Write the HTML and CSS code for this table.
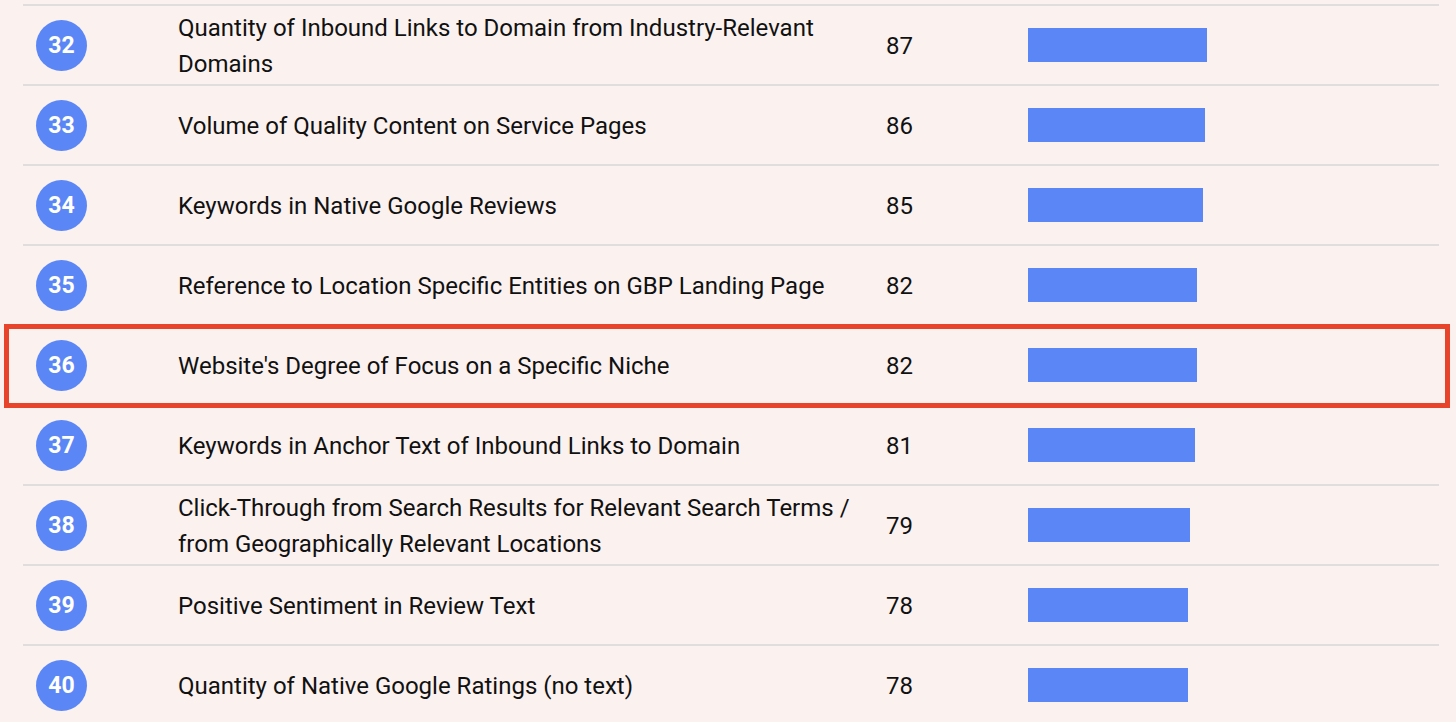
FILE: index.html
```html
<!DOCTYPE html>
<html>
<head>
<meta charset="utf-8">
<link rel="stylesheet" href="styles.css">
</head>
<body>
<div class="table">
  <div class="row"><div class="rank">32</div><div class="name">Quantity of Inbound Links to Domain from Industry-Relevant Domains</div><div class="score">87</div><div class="barcell"><div class="bar" style="width:179px"></div></div></div>
  <div class="row"><div class="rank">33</div><div class="name">Volume of Quality Content on Service Pages</div><div class="score">86</div><div class="barcell"><div class="bar" style="width:177px"></div></div></div>
  <div class="row"><div class="rank">34</div><div class="name">Keywords in Native Google Reviews</div><div class="score">85</div><div class="barcell"><div class="bar" style="width:175px"></div></div></div>
  <div class="row"><div class="rank">35</div><div class="name">Reference to Location Specific Entities on GBP Landing Page</div><div class="score">82</div><div class="barcell"><div class="bar" style="width:169px"></div></div></div>
  <div class="row highlight"><div class="rank">36</div><div class="name">Website's Degree of Focus on a Specific Niche</div><div class="score">82</div><div class="barcell"><div class="bar" style="width:169px"></div></div></div>
  <div class="row"><div class="rank">37</div><div class="name">Keywords in Anchor Text of Inbound Links to Domain</div><div class="score">81</div><div class="barcell"><div class="bar" style="width:167px"></div></div></div>
  <div class="row"><div class="rank">38</div><div class="name">Click-Through from Search Results for Relevant Search Terms / from Geographically Relevant Locations</div><div class="score">79</div><div class="barcell"><div class="bar" style="width:162px"></div></div></div>
  <div class="row"><div class="rank">39</div><div class="name">Positive Sentiment in Review Text</div><div class="score">78</div><div class="barcell"><div class="bar" style="width:160px"></div></div></div>
  <div class="row"><div class="rank">40</div><div class="name">Quantity of Native Google Ratings (no text)</div><div class="score">78</div><div class="barcell"><div class="bar" style="width:160px"></div></div></div>
</div>
</body>
</html>
```
FILE: styles.css
```css
html, body {
  margin: 0;
  padding: 0;
  background: #fbf2f0;
  font-family: Roboto, "Liberation Sans", sans-serif;
  color: #111;
  overflow: hidden;
}

.table {
  margin-left: 23px;
  width: 1416px;
  padding-top: 4px;
}

.row {
  position: relative;
  display: grid;
  grid-template-columns: 142px 708px 142px 1fr;
  align-items: center;
  height: 78px;
  border-top: 2px solid #e0dedc;
  padding-left: 13px;
}

.rank {
  width: 51px;
  height: 51px;
  border-radius: 50%;
  background: #5b87f6;
  color: #fff;
  font-weight: 700;
  font-size: 23px;
  display: flex;
  align-items: center;
  justify-content: center;
}

.name {
  font-size: 24px;
  line-height: 36px;
  padding-right: 20px;
  padding-top: 2px;
}

.score {
  font-size: 24px;
  padding-top: 2px;
}

.bar {
  height: 34px;
  background: #5b87f6;
}

.highlight {
  z-index: 1;
}

.highlight::after {
  content: "";
  position: absolute;
  top: -2px;
  bottom: -4px;
  left: -19px;
  right: -11px;
  border: 5px solid #e8432b;
  pointer-events: none;
}
```
